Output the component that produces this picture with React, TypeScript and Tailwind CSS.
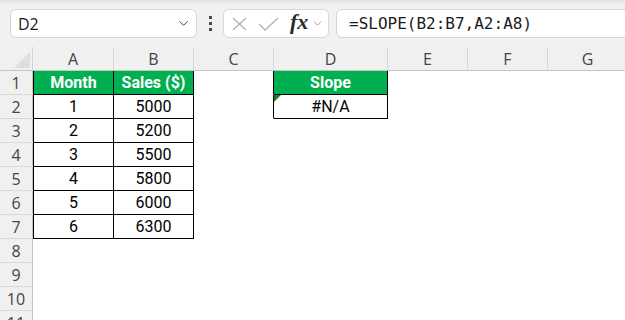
import { ChevronDown } from "lucide-react";

const cols = [
  { key: "A", w: "w-[81px]" },
  { key: "B", w: "w-[80px]" },
  { key: "C", w: "w-[80px]" },
  { key: "D", w: "w-[114px]" },
  { key: "E", w: "w-[80px]" },
  { key: "F", w: "w-[80px]" },
  { key: "G", w: "w-[80px]" },
];

// table contents, by row number and column
const data: Record<number, Record<string, string>> = {
  1: { A: "Month", B: "Sales ($)", D: "Slope" },
  2: { A: "1", B: "5000", D: "#N/A" },
  3: { A: "2", B: "5200" },
  4: { A: "3", B: "5500" },
  5: { A: "4", B: "5800" },
  6: { A: "5", B: "6000" },
  7: { A: "6", B: "6300" },
};

const inTable = (row: number, col: string) =>
  ((col === "A" || col === "B") && row <= 7) || (col === "D" && row <= 2);

const Cell = ({ row, col, w }: { row: number; col: string; w: string }) => {
  const boxed = inTable(row, col);
  const header = boxed && row === 1;
  // C carries the left edge of the Slope box
  const leftOfD = col === "C" && row <= 2;
  return (
    <div
      className={`relative shrink-0 h-full flex items-center justify-center border-b border-r ${w} ${
        boxed ? "border-black" : leftOfD ? "border-b-transparent border-r-black" : "border-transparent"
      } ${boxed && col === "A" ? "border-l border-l-black" : ""} ${
        header ? "bg-[#00b050] text-white font-bold" : "bg-white text-black"
      }`}
    >
      {col === "D" && row === 2 && (
        <svg className="absolute left-0 top-0" width="7" height="7" viewBox="0 0 7 7">
          <polygon points="0,0 7,0 0,7" fill="#1d7a2e" />
        </svg>
      )}
      {data[row]?.[col] ?? ""}
    </div>
  );
};

export default function App() {
  const rows = [1, 2, 3, 4, 5, 6, 7, 8, 9, 10, 11];
  return (
    <div className="w-[625px] h-[320px] overflow-hidden bg-[#f0f0f0] font-['Open_Sans',sans-serif]">
      {/* formula bar */}
      <div className="h-[47px] relative bg-[#f1f1f1]">
        <div className="absolute inset-x-0 top-0 h-[4px] bg-gradient-to-b from-[#e2e2e2] to-[#f1f1f1]" />
        <div className="relative flex items-start pt-[9px] pl-[10px] gap-0">
          <div className="w-[187px] h-[29px] bg-white border border-[#d6d6d6] rounded-[6px] flex items-center pl-[7px] pr-[5px] text-[16px] text-[#1b1b1b]">
            <span className="flex-1">D2</span>
            <ChevronDown size={15} strokeWidth={1.6} className="text-[#444]" />
          </div>
          <div className="w-[26px] h-[29px] flex flex-col items-center justify-center gap-[3px]">
            <span className="w-[3px] h-[3px] bg-[#4a4a4a]" />
            <span className="w-[3px] h-[3px] bg-[#4a4a4a]" />
            <span className="w-[3px] h-[3px] bg-[#4a4a4a]" />
          </div>
          <div className="w-[106px] h-[29px] bg-white border border-[#d6d6d6] rounded-[6px] flex items-center pl-[6px]">
            <svg width="18" height="14" viewBox="0 0 18 14" className="ml-[1px]">
              <path d="M2 1 L15 13 M15 1 L2 13" stroke="#b3b3b3" strokeWidth="1.3" fill="none" />
            </svg>
            <svg width="22" height="14" viewBox="0 0 22 14" className="ml-[9px]">
              <path d="M1 7 L7 13 L20 1" stroke="#b3b3b3" strokeWidth="1.3" fill="none" />
            </svg>
            <span className="ml-[10px] font-['Liberation_Serif',serif] italic font-bold text-[22px] leading-none text-[#2b2b2b] -mt-[3px]">
              fx
            </span>
            <ChevronDown size={13} strokeWidth={1.5} className="ml-[3px] text-[#8a8a8a]" />
          </div>
          <div className="ml-[7px] flex-1 h-[29px] bg-white border border-[#d6d6d6] rounded-[6px] flex items-center pl-[12px] font-['DejaVu_Sans_Mono',monospace] text-[16px] text-[#1b1b1b] mr-[-20px]">
            =SLOPE(B2:B7,A2:A8)
          </div>
        </div>
      </div>

      {/* column headers */}
      <div className="flex h-[24px] bg-[#f0f0f0] border-b border-[#c4c4c4] text-[16px] text-[#444]">
        <div className="relative shrink-0 w-[33px] h-full border-r border-[#d4d4d4]">
          <svg className="absolute left-[14px] top-[5px]" width="17" height="17" viewBox="0 0 17 17">
            <polygon points="16,0 16,16 0,16" fill="#dedede" />
          </svg>
        </div>
        {cols.map((c) => (
          <div
            key={c.key}
            className={`shrink-0 ${c.w} h-full flex items-center justify-center border-r border-[#d8d8d8]`}
          >
            {c.key}
          </div>
        ))}
      </div>

      {/* rows */}
      {rows.map((r) => (
        <div key={r} className="flex h-[24px]">
          <div className="shrink-0 w-[33px] h-full flex items-center justify-center bg-[#f0f0f0] border-r border-b border-r-[#c4c4c4] border-b-[#d8d8d8] text-[16px] text-[#444]">
            {r}
          </div>
          <div className="flex h-full font-['Roboto',sans-serif] text-[16px]">
            {cols.map((c) => (
              <Cell key={c.key} row={r} col={c.key} w={c.w} />
            ))}
          </div>
        </div>
      ))}
    </div>
  );
}
